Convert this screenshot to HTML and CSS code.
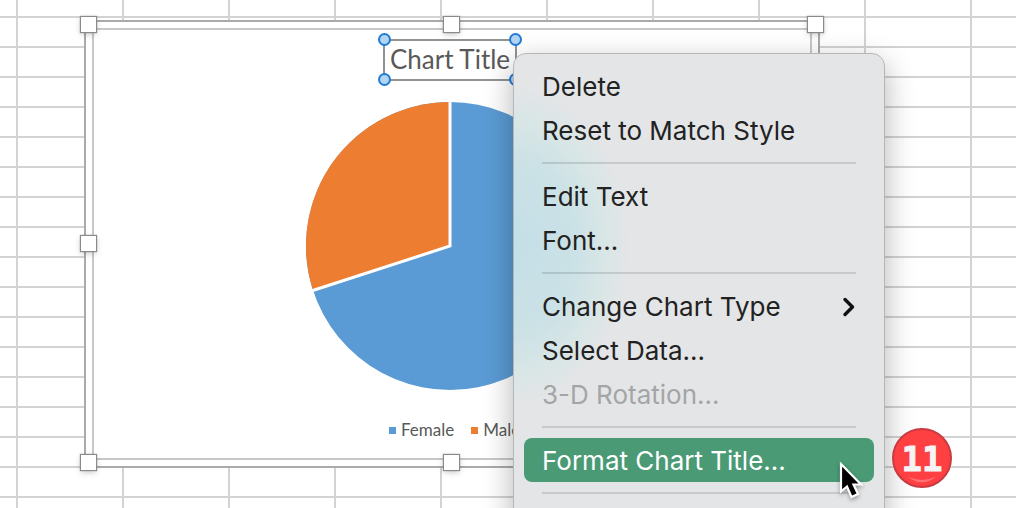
FILE: index.html
```html
<!DOCTYPE html>
<html lang="en">
<head>
<meta charset="utf-8">
<title>Chart</title>
<link rel="stylesheet" href="styles.css">
</head>
<body>
<main class="sheet">
  <section class="chart">
    <div class="plot">
      <h2 class="title">Chart Title
        <span class="dot nw"></span><span class="dot ne"></span><span class="dot sw"></span><span class="dot se"></span>
      </h2>
      <svg class="pie" viewBox="-145 -145 290 290" role="img" aria-label="Female 70%, Male 30%">
        <circle r="144" fill="#5b9bd5"/>
        <path d="M0 0L-137 44.500A144 144 0 0 1 0 -144Z" fill="#ed7d31"/>
        <path d="M0 -145V0L-138 44.800" fill="none" stroke="#fff" stroke-width="3"/>
      </svg>
      <ul class="legend">
        <li class="key female">Female</li>
        <li class="key male">Male</li>
      </ul>
    </div>
    <span class="handle top left"></span><span class="handle top middle"></span><span class="handle top right"></span>
    <span class="handle center left"></span><span class="handle center right"></span>
    <span class="handle bottom left"></span><span class="handle bottom middle"></span><span class="handle bottom right"></span>
  </section>

  <div class="menu" role="menu">
    <button class="item" role="menuitem">Delete</button>
    <button class="item" role="menuitem">Reset to Match Style</button>
    <hr class="rule">
    <button class="item" role="menuitem">Edit Text</button>
    <button class="item" role="menuitem">Font...</button>
    <hr class="rule">
    <button class="item" role="menuitem">Change Chart Type
      <svg class="chevron" viewBox="0 0 14 20" aria-hidden="true"><path d="M3 2.500L10.500 10L3 17.500" fill="none" stroke="#111" stroke-width="3.400" stroke-linecap="round" stroke-linejoin="round"/></svg>
    </button>
    <button class="item" role="menuitem">Select Data...</button>
    <button class="item" role="menuitem" disabled>3-D Rotation...</button>
    <hr class="rule">
    <button class="item active" role="menuitem">Format Chart Title...</button>
    <hr class="rule">
    <button class="item" role="menuitem" aria-label="More"></button>
  </div>

  <div class="step">11
    <svg class="shine" viewBox="0 0 60 60" aria-hidden="true"><path d="M15 50Q30 57 45 50Q30 62 15 50Z" fill="#ff7377"/></svg>
  </div>
  <svg class="pointer" viewBox="0 0 26 40" aria-hidden="true">
    <path d="M2 2V29.500L8 24.500L12.500 35L19 32L14.500 22.500H22Z" fill="#000" stroke="#fff" stroke-width="2.200"/>
  </svg>
</main>
</body>
</html>
```
FILE: styles.css
```css
* { box-sizing: border-box; }
body { margin: 0; }

.sheet {
  position: relative;
  height: 100vh;
  overflow: hidden;
  background-color: #fff;
  background-image:
    linear-gradient(#d3d3d3 2px, transparent 2px),
    linear-gradient(90deg, #d3d3d3 2px, transparent 2px);
  background-size: 106px 30px;
  background-position: 16px 16px;
}

/* Selected chart object */
.chart {
  position: absolute;
  left: 84px;
  top: 20px;
  width: 736px;
  height: 448px;
  padding: 6px;
  background: #fff;
  border: 2px solid #aaa;
}
.plot {
  display: flex;
  flex-direction: column;
  align-items: center;
  height: 100%;
  padding: 9px 4px 0 0;
  border: 2px solid #c8c8c8;
  font-family: Lato, Carlito, sans-serif;
  color: #595959;
}
.title {
  position: relative;
  margin: 0;
  padding-bottom: 2px;
  width: 134px;
  border: 2px solid #929292;
  font-size: 26px;
  font-weight: 400;
  line-height: 36px;
  text-align: center;
  white-space: nowrap;
}
.dot {
  position: absolute;
  width: 13px;
  height: 13px;
  border: 2px solid #1f7cd8;
  border-radius: 50%;
  background: #b3d4f3;
}
.nw, .ne { top: -8px; }
.sw, .se { bottom: -7px; }
.nw, .sw { left: -7px; }
.ne, .se { right: -7px; }

.pie { width: 290px; height: 290px; margin-top: 20px; }
.legend {
  display: flex;
  gap: 17px;
  margin: 27px 0 0;
  padding: 0 0 0 9px;
  list-style: none;
  font-size: 17px;
  line-height: 24px;
}
.key { display: flex; align-items: center; gap: 5px; }
.key::before { content: ""; width: 7px; height: 7px; background: #5b9bd5; }
.male::before { background: #ed7d31; }

.handle {
  position: absolute;
  width: 15px;
  height: 15px;
  background: #fff;
  box-shadow: 0 0 1px 1px #8a8a8a, 0 2px 6px rgba(0, 0, 0, .25);
}
.handle.top { top: -5px; }
.handle.center { top: calc(50% - 8px); }
.handle.bottom { bottom: -4px; }
.handle.left { left: -5px; }
.handle.middle { left: calc(50% - 8px); }
.handle.right { right: -5px; }

/* Context menu */
.menu {
  position: absolute;
  left: 513px;
  top: 53px;
  width: 372px;
  padding: 10px;
  border: 1px solid #b5b6b7;
  border-radius: 13px;
  background: radial-gradient(ellipse 116px 160px at 0 192px, #c5dfe7 0, #cae1e6 50%, #d9e6e6 80%, #e4e5e7 100%);
  box-shadow: 0 10px 30px rgba(0, 0, 0, .3);
}
.item {
  display: flex;
  align-items: center;
  justify-content: space-between;
  width: 100%;
  height: 44px;
  padding: 2px 18px 0;
  border: 0;
  border-radius: 8px;
  background: none;
  color: #222;
  font: 400 26px/42px Inter, sans-serif;
  text-align: left;
  white-space: nowrap;
}
.item:disabled { color: #a4a5a6; }
.item.active { background: #4a9a76; color: #fff; }
.rule {
  height: 2px;
  margin: 10px 18px;
  border: 0;
  background: rgba(0, 0, 0, .12);
}
.chevron { width: 14px; height: 20px; }

.step {
  position: absolute;
  left: 892px;
  top: 428px;
  width: 60px;
  height: 60px;
  border: 2px solid #c93a40;
  border-radius: 50%;
  background: #ff4042;
  color: #f5f5f5;
  font: 700 34px/58px "DejaVu Sans Mono", monospace;
  -webkit-text-stroke: 1px #f5f5f5;
  text-align: center;
}
.shine { position: absolute; inset: 0; }
.pointer {
  position: absolute;
  left: 839px;
  top: 462px;
  width: 26px;
  height: 40px;
  filter: drop-shadow(0 2px 2px rgba(0, 0, 0, .35));
}
```
